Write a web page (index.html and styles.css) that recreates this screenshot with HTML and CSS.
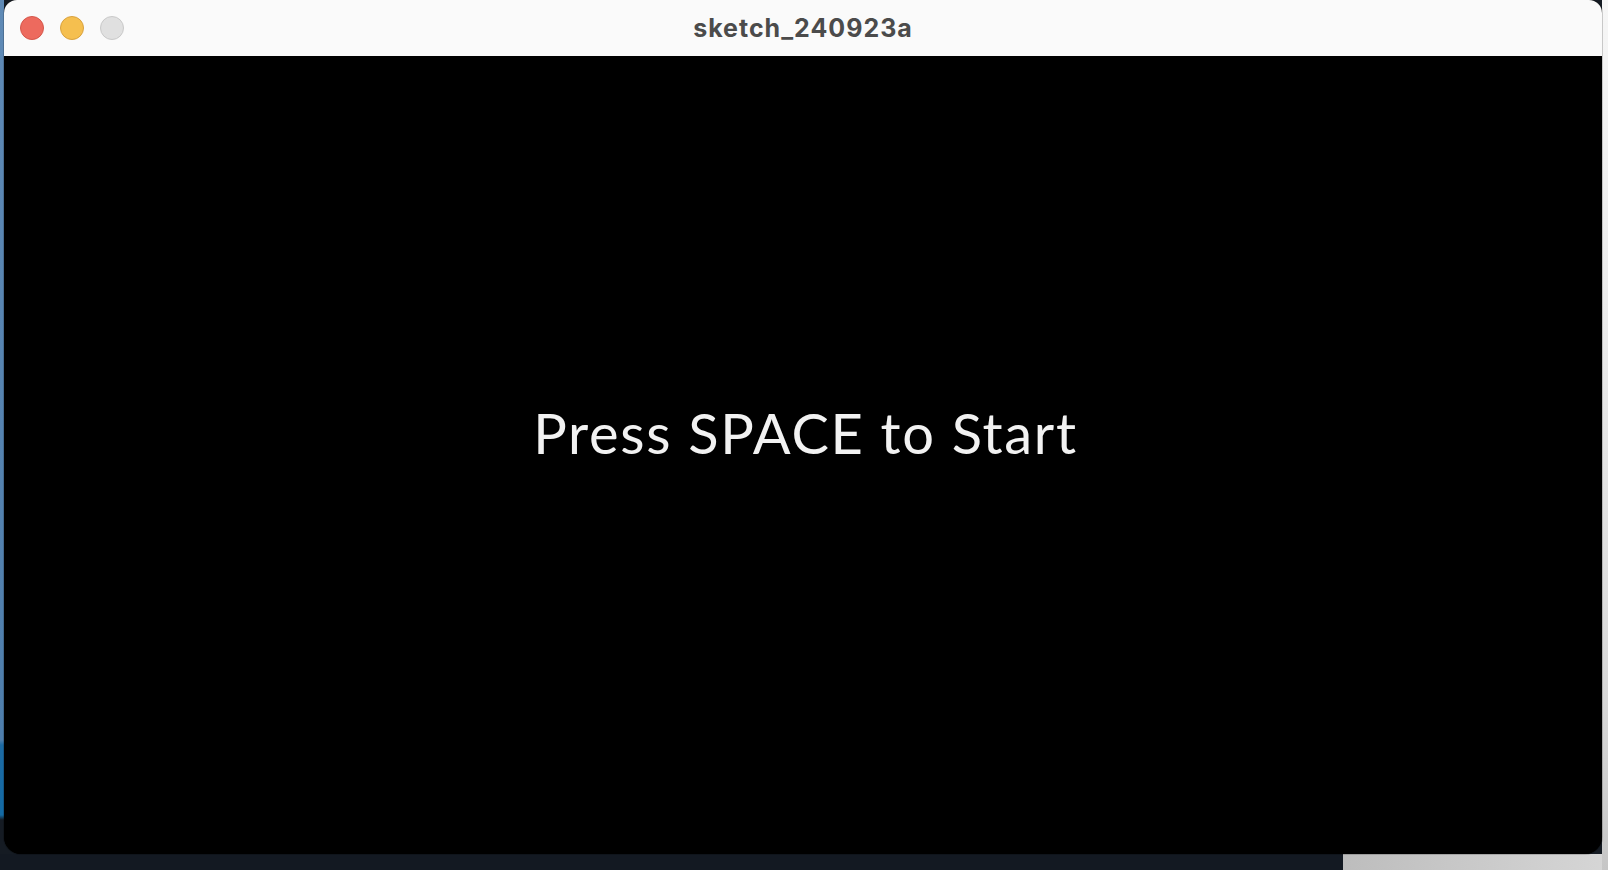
FILE: index.html
```html
<!DOCTYPE html>
<html>
<head>
<meta charset="utf-8">
<title>sketch_240923a</title>
<link rel="stylesheet" href="styles.css">
</head>
<body>
<div class="desktop">
  <div class="window">
    <div class="titlebar">
      <div class="lights">
        <span class="light red"></span>
        <span class="light yellow"></span>
        <span class="light gray"></span>
      </div>
      <div class="title">sketch_240923a</div>
      <div class="spacer"></div>
    </div>
    <div class="canvas">
      <div class="message">Press SPACE to Start</div>
    </div>
  </div>
</div>
</body>
</html>
```
FILE: styles.css
```css
html, body {
  margin: 0;
  padding: 0;
  width: 1608px;
  height: 870px;
  overflow: hidden;
}

.desktop {
  width: 1608px;
  height: 870px;
  box-sizing: border-box;
  padding: 0 6px 16px 4px;
  background:
    linear-gradient(to bottom, #f6f6f6 0px, #ececec 300px, #d8d8d8 700px, #c6c6c6 870px) right top / 6px 870px no-repeat,
    linear-gradient(to right, #131922 0px, #131922 1343px, #bdbdbd 1343px, #d6d6d6 1608px) left bottom / 1608px 16px no-repeat,
    linear-gradient(to bottom, #5f8ab6 0px, #4e7eac 740px, #1c6aa3 745px, #136aa4 815px, #151b23 820px) left top / 4px 870px no-repeat,
    #151b23;
}

.window {
  display: flex;
  flex-direction: column;
  width: 1598px;
  height: 854px;
  border-radius: 13px 13px 17px 17px;
  overflow: hidden;
  background: #000;
  box-shadow: 0 0 0 1px rgba(0, 0, 0, 0.18);
}

.titlebar {
  flex: 0 0 56px;
  height: 56px;
  box-sizing: border-box;
  display: grid;
  grid-template-columns: 1fr auto 1fr;
  align-items: center;
  background: #fafafa;
  padding: 0 16px;
}

.lights {
  display: flex;
  gap: 16px;
}

.light {
  width: 22px;
  height: 22px;
  border-radius: 50%;
  border: 1px solid transparent;
}

.light.red {
  background: #ed6a5e;
  border-color: #d5574b;
}

.light.yellow {
  background: #f5bf4f;
  border-color: #d9a23f;
}

.light.gray {
  background: #e0e0e0;
  border-color: #c9c9c9;
}

.title {
  font-family: "Inter", "Liberation Sans", sans-serif;
  font-weight: 700;
  font-size: 25px;
  letter-spacing: 1px;
  color: #4b4b4b;
  line-height: 54px;
}

.canvas {
  flex: 1 1 auto;
  display: flex;
  align-items: center;
  justify-content: center;
  background: #000;
  padding-left: 5px;
  padding-bottom: 44px;
}

.message {
  font-family: "Lato", "Noto Sans", sans-serif;
  font-weight: 400;
  font-size: 56px;
  letter-spacing: 1.7px;
  line-height: 1;
  color: #f2f2f2;
}
```
